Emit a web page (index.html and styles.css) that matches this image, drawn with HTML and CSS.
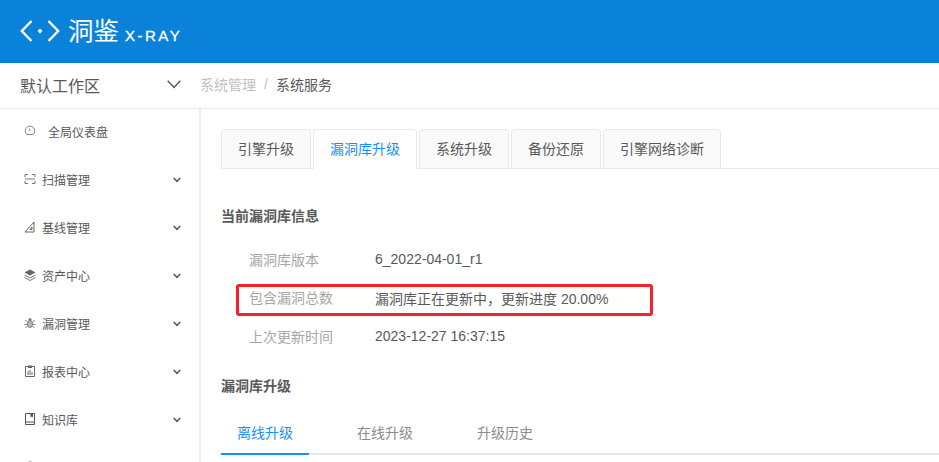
FILE: index.html
```html
<!DOCTYPE html>
<html lang="zh">
<head>
<meta charset="utf-8">
<title>系统服务</title>
<link rel="stylesheet" href="styles.css">
</head>
<body>
<div class="page">
  <header class="header">
    <svg class="logo-mark" width="40" height="24" viewBox="0 0 40 24">
      <path d="M11.500 2 1.800 12l9.700 10M28.500 2l9.700 10-9.700 10" fill="none" stroke="#fff" stroke-width="2.400"/>
      <path d="M20 9.500l2.500 2.500-2.500 2.500-2.500-2.500z" fill="#fff"/>
    </svg>
    <span class="logo-cn">洞鉴</span>
    <span class="logo-en">X-RAY</span>
  </header>
  <div class="topbar">
    <div class="workspace">
      <span>默认工作区</span>
      <svg width="14" height="9" viewBox="0 0 14 9"><path d="M.7.7 7 7.500 13.300.7" fill="none" stroke="#555" stroke-width="1.400"/></svg>
    </div>
    <nav class="crumbs">
      <span class="crumb-muted">系统管理</span>
      <span class="crumb-sep">/</span>
      <span class="crumb-current">系统服务</span>
    </nav>
  </div>
  <div class="body">
    <aside class="sidebar">
      <div class="menu-item first">
        <svg class="ico" width="12" height="12" viewBox="0 0 12 12"><path d="M2.800 9.500A4.800 4.800 0 1 1 9.200 9.500zM6 6 5.300 3.500" fill="none" stroke="#777" stroke-width=".9"/></svg>
        <span class="first-label">全局仪表盘</span>
      </div>
      <div class="menu-item">
        <svg class="ico" width="12" height="12" viewBox="0 0 12 12"><path d="M1 4V1.500h3M8 1.500h3V4M1 8v2.500h3M8 10.500h3V8M1 6h10" fill="none" stroke="#777"/></svg>
        <span>扫描管理</span>
        <svg class="caret" width="8" height="6" viewBox="0 0 8 6"><path d="M.7.9 4 4.300 7.300.9" fill="none" stroke="#555" stroke-width="1.500"/></svg>
      </div>
      <div class="menu-item">
        <svg class="ico" width="12" height="12" viewBox="0 0 12 12"><path d="M1 11 10 1v10zM6 8.500h2V6z" fill="none" stroke="#666"/></svg>
        <span>基线管理</span>
        <svg class="caret" width="8" height="6" viewBox="0 0 8 6"><path d="M.7.9 4 4.300 7.300.9" fill="none" stroke="#555" stroke-width="1.500"/></svg>
      </div>
      <div class="menu-item">
        <svg class="ico" width="12" height="12" viewBox="0 0 12 12"><path d="M6 .5 11.500 3.500 6 6.500.5 3.500z" fill="#666"/><path d="M.5 6 6 9l5.500-3M.5 8.500 6 11.500l5.500-3" fill="none" stroke="#777"/></svg>
        <span>资产中心</span>
        <svg class="caret" width="8" height="6" viewBox="0 0 8 6"><path d="M.7.9 4 4.300 7.300.9" fill="none" stroke="#555" stroke-width="1.500"/></svg>
      </div>
      <div class="menu-item">
        <svg class="ico" width="12" height="12" viewBox="0 0 12 12"><ellipse cx="6" cy="7" rx="2.500" ry="3.500" fill="#bbb" stroke="#777"/><circle cx="6" cy="2.500" r="1.500" fill="#777"/><path d="M1 3l2.500 2M11 3 8.500 5M.5 7.500h3M11.500 7.500h-3M1.500 11l2-2M10.500 11l-2-2" stroke="#888"/></svg>
        <span>漏洞管理</span>
        <svg class="caret" width="8" height="6" viewBox="0 0 8 6"><path d="M.7.9 4 4.300 7.300.9" fill="none" stroke="#555" stroke-width="1.500"/></svg>
      </div>
      <div class="menu-item">
        <svg class="ico" width="12" height="12" viewBox="0 0 12 12"><path d="M1.500 1.500h9v10h-9z" fill="none" stroke="#666"/><path d="M4 .5h4v2.500H4zM3.500 6h1v4h-1zM5.500 5h1v5h-1zM7.500 7h1v3h-1z" fill="#666"/></svg>
        <span>报表中心</span>
        <svg class="caret" width="8" height="6" viewBox="0 0 8 6"><path d="M.7.9 4 4.300 7.300.9" fill="none" stroke="#555" stroke-width="1.500"/></svg>
      </div>
      <div class="menu-item">
        <svg class="ico" width="12" height="12" viewBox="0 0 12 12"><path d="M1.500.5h9v11h-9zM1.500 9h9" fill="none" stroke="#555"/><path d="M6.500.5h2.500v4L7.750 3.500 6.500 4.500z" fill="#555"/></svg>
        <span>知识库</span>
        <svg class="caret" width="8" height="6" viewBox="0 0 8 6"><path d="M.7.9 4 4.300 7.300.9" fill="none" stroke="#555" stroke-width="1.500"/></svg>
      </div>
      <div class="menu-item">
        <svg class="ico" width="12" height="12" viewBox="0 0 12 12"><circle cx="6" cy="6" r="5" fill="none" stroke="#666"/></svg>
      </div>
    </aside>
    <main class="content">
      <div class="card-tabs">
        <div class="card-tab">引擎升级</div>
        <div class="card-tab active">漏洞库升级</div>
        <div class="card-tab">系统升级</div>
        <div class="card-tab">备份还原</div>
        <div class="card-tab">引擎网络诊断</div>
      </div>
      <h3 class="section-title">当前漏洞库信息</h3>
      <div class="info">
        <div class="info-row"><span class="info-label">漏洞库版本</span><span class="info-value">6_2022-04-01_r1</span></div>
        <div class="info-row"><span class="info-label">包含漏洞总数</span><span class="info-value">漏洞库正在更新中，更新进度 20.00%</span></div>
        <div class="info-row"><span class="info-label">上次更新时间</span><span class="info-value">2023-12-27 16:37:15</span></div>
        <div class="highlight"></div>
      </div>
      <h3 class="section-title second">漏洞库升级</h3>
      <div class="line-tabs">
        <div class="line-tab active">离线升级</div>
        <div class="line-tab">在线升级</div>
        <div class="line-tab">升级历史</div>
      </div>
    </main>
  </div>
</div>
</body>
</html>
```

FILE: styles.css
```css
* { box-sizing: border-box; }
html, body { margin: 0; height: 462px; overflow: hidden; background: #fff; }
body { font-family: "Liberation Sans", "Noto Sans CJK SC", sans-serif; font-size: 14px; color: #595959; }
.page { width: 939px; height: 462px; overflow: hidden; display: flex; flex-direction: column; }

.header { flex: none; height: 63px; background: #0a82d9; display: flex; align-items: center; padding-left: 20px; color: #fff; }
.logo-mark { margin-top: -1px; }
.logo-cn { margin-left: 8px; font-size: 25.500px; line-height: 30px; margin-top: -1px; font-weight: 400; }
.logo-en { margin-left: 6px; margin-top: 7px; font-size: 15px; font-weight: 400; letter-spacing: 2.500px; -webkit-text-stroke: .3px #fff; white-space: nowrap; }

.topbar { flex: none; height: 46px; border-bottom: 1px solid #e8e8e8; display: flex; align-items: center; padding-bottom: 2px; }
.workspace { width: 200px; padding: 0 19px 0 20px; display: flex; align-items: center; justify-content: space-between; font-size: 16px; color: #595959; }
.crumbs { display: flex; align-items: center; gap: 8px; margin-top: -2px; }
.crumb-muted { color: #bfbfbf; }
.crumb-sep { color: #bfbfbf; }
.crumb-current { color: #595959; }

.body { flex: 1; display: flex; min-height: 0; }
.sidebar { flex: none; width: 201px; border-right: 2px solid #eee; overflow: hidden; font-size: 12px; }
.menu-item { height: 48px; display: flex; align-items: center; padding: 0 18px 0 24px; color: #595959; }
.menu-item.first { height: 46px; padding-bottom: 2px; }
.ico { flex: none; margin-right: 6px; }
.first-label { margin-left: 6px; }
.menu-item .caret { margin-left: auto; margin-top: 2px; }

.content { flex: 1; min-width: 0; padding: 20px 0 0 20px; }
.card-tabs { display: flex; gap: 2px; height: 40px; border-bottom: 1px solid #e8e8e8; }
.card-tab { height: 40px; padding: 0 16px; line-height: 38px; border: 1px solid #e8e8e8; border-radius: 4px 4px 0 0; background: #fafafa; color: #595959; }
.card-tab.active { background: #fff; color: #1890ff; border-bottom-color: #fff; }

.section-title { margin: 37px 0 0; font-size: 14px; line-height: 20px; font-weight: 700; color: #595959; }
.section-title.second { margin-top: 20.500px; }

.info { position: relative; margin-top: 14px; }
.info-row { height: 38.500px; display: flex; align-items: center; padding-left: 28px; }
.info-label { width: 126px; color: #a6a6a6; font-size: 14px; margin-top: -1px; }
.info-value { color: #595959; font-size: 14px; }
.highlight { position: absolute; left: 15px; top: 44px; width: 417px; height: 32px; border: 3px solid #f5222d; border-radius: 3px; }

.line-tabs { display: flex; gap: 32px; margin-top: 17px; border-bottom: 2px solid #e8e8e8; height: 42px; }
.line-tab { width: 88px; height: 42px; padding-top: 9px; text-align: center; line-height: 22px; color: #8c8c8c; }
.line-tab.active { color: #1890ff; border-bottom: 2px solid #1890ff; }
```
